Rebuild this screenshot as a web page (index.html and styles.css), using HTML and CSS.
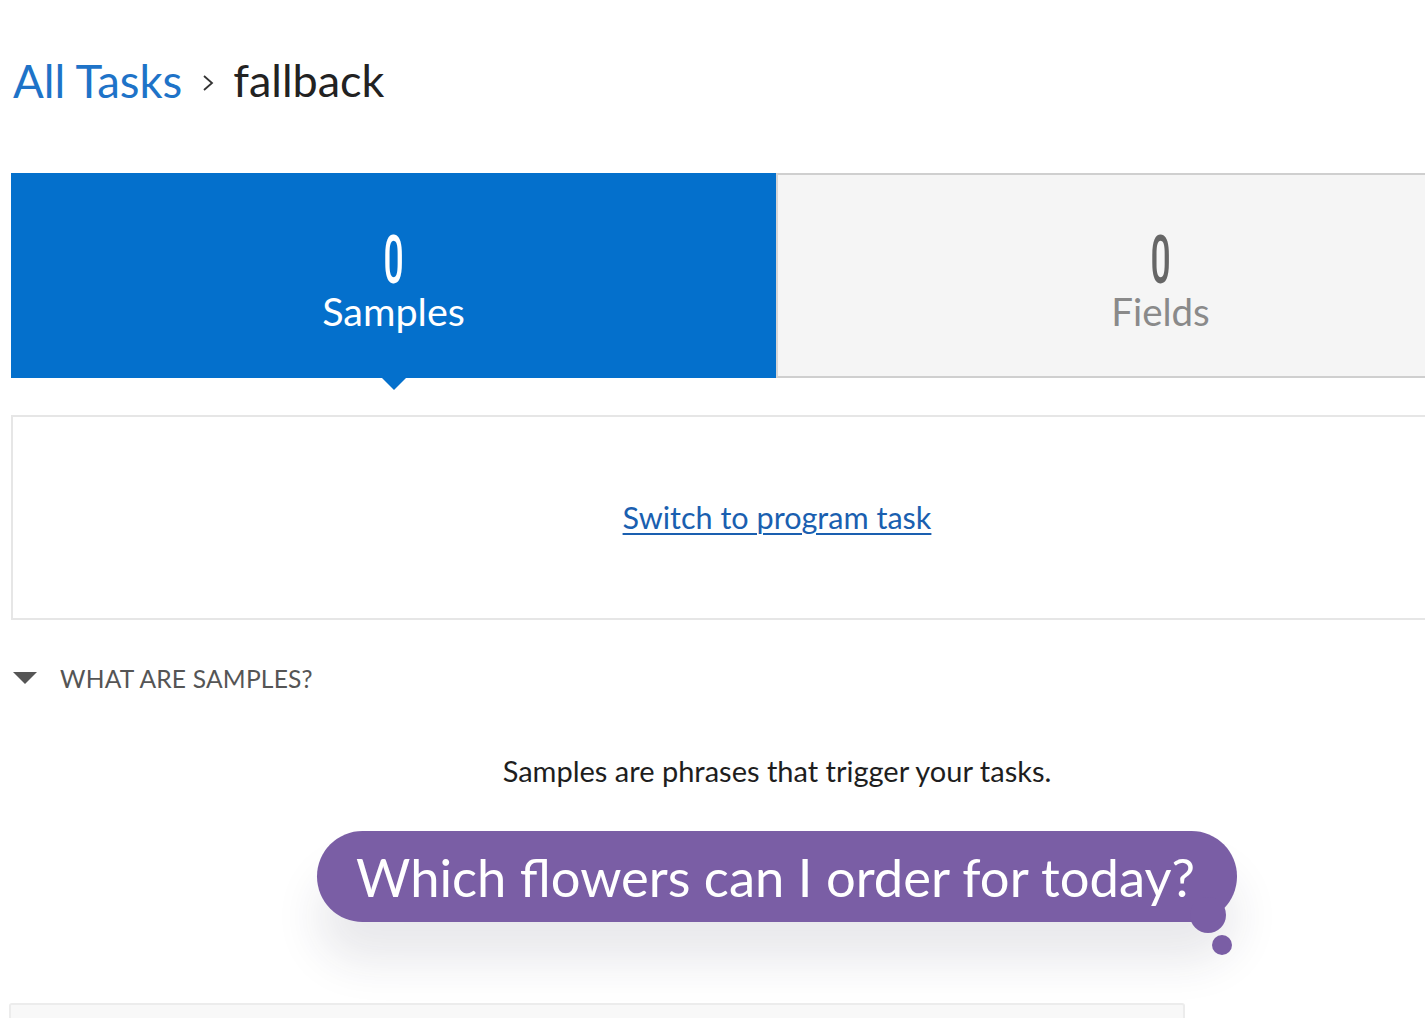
FILE: index.html
```html
<!DOCTYPE html>
<html>
<head>
<meta charset="utf-8">
<link rel="stylesheet" href="styles.css">
</head>
<body>
<div class="page">
  <nav class="crumbs">
    <a class="crumb-link" href="#">All Tasks</a>
    <svg class="chev" width="14" height="20" viewBox="0 0 14 20"><path d="M3 3 L11 10 L3 17" fill="none" stroke="#333" stroke-width="1.8"/></svg>
    <span class="crumb-current">fallback</span>
  </nav>

  <div class="tabs">
    <div class="tab active">
      <span class="count"><span class="digit">0</span></span>
      <span class="label">Samples</span>
    </div>
    <div class="tab">
      <span class="count"><span class="digit">0</span></span>
      <span class="label">Fields</span>
    </div>
  </div>

  <div class="panel">
    <a class="switch" href="#">Switch to program task</a>
  </div>

  <div class="summary">
    <span class="tri"></span>
    <span class="summary-text">WHAT ARE SAMPLES?</span>
  </div>

  <p class="desc">Samples are phrases that trigger your tasks.</p>

  <div class="illus">
    <div class="bubble">
      Which flowers can I order for today?
      <span class="bump"></span>
      <span class="dot"></span>
    </div>
  </div>

  <div class="card"></div>
</div>
</body>
</html>
```

FILE: styles.css
```css
html { overflow: hidden; }
body {
  margin: 0;
  background: #fff;
  font-family: "Lato", "Open Sans", sans-serif;
}
.page {
  width: 1532px;
  padding: 0 11px;
}
.crumbs {
  display: flex;
  align-items: center;
  height: 80px;
  padding-top: 40px;
}
.crumb-link {
  color: #1e73c8;
  text-decoration: none;
  font-size: 45.5px;
  margin-left: 2px;
}
.chev {
  margin: 6px 18px 0 19px;
}
.crumb-current {
  color: #222;
  font-size: 45px;
}
.tabs {
  display: flex;
  margin-top: 53px;
  height: 205px;
}
.tab {
  flex: 1;
  display: flex;
  flex-direction: column;
  align-items: center;
  justify-content: center;
  background: #f5f5f5;
  border-top: 2px solid #cfcfcf;
  border-bottom: 2px solid #cfcfcf;
  border-left: 2px solid #d6d6d6;
  position: relative;
  color: #8a8a8a;
  padding-top: 14px;
  box-sizing: border-box;
}
.tab.active {
  background: #0470cc;
  border: none;
  color: #fff;
}
.tab.active::after {
  content: "";
  position: absolute;
  left: 50%;
  bottom: -12px;
  margin-left: -12px;
  border-left: 12px solid transparent;
  border-right: 12px solid transparent;
  border-top: 12px solid #0470cc;
}
.count {
  height: 56px;
  display: flex;
  align-items: center;
  overflow: visible;
}
.digit {
  display: inline-block;
  font-family: "Roboto", sans-serif;
  font-weight: 500;
  font-size: 48px;
  line-height: 40px;
  transform: scale(0.74, 1.4);
  color: #fff;
}
.tab:not(.active) .digit { color: #666; }
.label {
  font-size: 39.5px;
  line-height: 44px;
}
.tab:not(.active) .label { font-size: 38.5px; }
.panel {
  margin-top: 37px;
  height: 205px;
  border: 2px solid #e6e6e6;
  box-sizing: border-box;
  display: flex;
  align-items: center;
  justify-content: center;
}
.switch {
  color: #1a5fb0;
  font-size: 30.6px;
  text-decoration: underline;
  text-underline-offset: 4px;
  text-decoration-thickness: 2px;
}
.summary {
  display: flex;
  align-items: center;
  height: 40px;
  margin-top: 38px;
}
.tri {
  width: 0;
  height: 0;
  margin-left: 2px;
  border-left: 12px solid transparent;
  border-right: 12px solid transparent;
  border-top: 12px solid #555;
}
.summary-text {
  margin-left: 23px;
  color: #555;
  font-size: 24.6px;
  letter-spacing: 0.2px;
}
.desc {
  margin: 54px 0 0 0;
  text-align: center;
  color: #1e1e1e;
  font-size: 29px;
  line-height: 37px;
}
.illus {
  display: flex;
  justify-content: center;
  margin-top: 42px;
  padding-right: 1px;
  height: 172px;
}
.bubble {
  position: relative;
  width: 920px;
  height: 91px;
  box-sizing: border-box;
  border-radius: 46px;
  background: #7a5ea5;
  color: #fff;
  font-size: 52.5px;
  line-height: 91px;
  text-align: center;
  box-shadow: 0 40px 45px rgba(40, 40, 70, 0.10);
  padding-right: 2px;
}
.bump {
  position: absolute;
  right: 11px;
  bottom: -11px;
  width: 36px;
  height: 36px;
  border-radius: 50%;
  background: #7a5ea5;
}
.dot {
  position: absolute;
  right: 5px;
  bottom: -33px;
  width: 20px;
  height: 20px;
  border-radius: 50%;
  background: #7a5ea5;
}
.card {
  width: 1172px;
  height: 40px;
  margin-left: -2px;
  background: #f8f8f8;
  border: 2px solid #ececec;
  border-bottom: none;
  border-radius: 3px 3px 0 0;
}
```
